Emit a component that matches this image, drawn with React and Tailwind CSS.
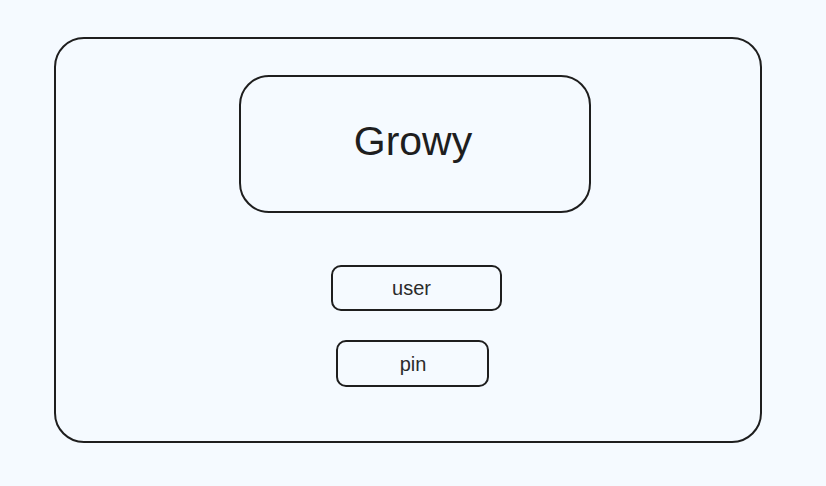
export default function App() {
  return (
    <div className="bg-[#f5faff] w-[826px] h-[486px] pt-[37px] pl-[54px] font-['Liberation_Sans',Arial,sans-serif] text-[#1e1e1e]">
      {/* outer frame */}
      <div className="flex flex-col items-center pt-[36px] pl-[14px] border-2 border-[#1e1e1e] rounded-[30px] w-[708px] h-[406px]">
        <div className="flex justify-center items-center pr-[4px] pb-[6px] border-2 border-[#1e1e1e] rounded-[30px] w-[352px] h-[138px]">
          <span className="text-[41px] leading-none">Growy</span>
        </div>

        <div className="flex justify-center items-center mt-[52px] ml-[3px] pr-[10px] border-2 border-[#1e1e1e] rounded-[10px] w-[171px] h-[46px]">
          <span className="text-[20px] text-[#2b2b2b] leading-none">user</span>
        </div>

        <div className="flex justify-center items-center mt-[29px] mr-[6px] pl-[2px] border-2 border-[#1e1e1e] rounded-[10px] w-[153px] h-[47px]">
          <span className="text-[20px] text-[#2b2b2b] leading-none">pin</span>
        </div>
      </div>
    </div>
  );
}
